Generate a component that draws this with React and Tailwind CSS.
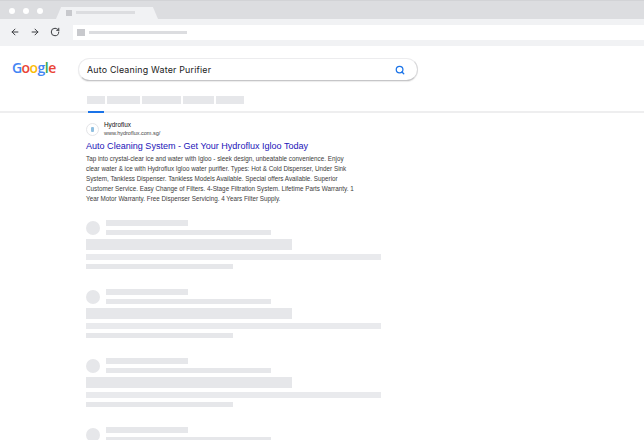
import { ArrowLeft, ArrowRight, RotateCw, Search } from "lucide-react";

function SkeletonResult() {
  return (
    <div className="h-[69px] flex flex-col">
      <div className="flex items-center gap-[6px] h-[16px]">
        <div className="w-[14px] h-[14px] rounded-full bg-[#e6e7ea]" />
        <div className="flex flex-col gap-[4px]">
          <div className="w-[82px] h-[6px] bg-[#e6e7ea]" />
          <div className="w-[165px] h-[5px] bg-[#e6e7ea]" />
        </div>
      </div>
      <div className="w-[206px] h-[11px] bg-[#e6e7ea] mt-[3px]" />
      <div className="w-[295px] h-[6px] bg-[#e9eaed] mt-[4px]" />
      <div className="w-[147px] h-[5px] bg-[#e6e7ea] mt-[4px]" />
    </div>
  );
}

export default function App() {
  return (
    <div className="w-[644px] h-[440px] overflow-hidden bg-white font-['Liberation_Sans',sans-serif]">
      {/* Tab strip */}
      <div className="h-[19px] bg-[#dcdde0] border-t border-[#d2d3d6] flex items-end">
        <div className="flex gap-[8px] pl-[9px] pb-[5px]">
          <div className="w-[6px] h-[6px] rounded-full bg-white" />
          <div className="w-[6px] h-[6px] rounded-full bg-white" />
          <div className="w-[6px] h-[6px] rounded-full bg-white" />
        </div>
        <div className="ml-[13px] w-[102px] h-[12px] bg-[#f1f2f4] [clip-path:polygon(5%_0,95%_0,100%_100%,0_100%)] flex items-center gap-[4px] pl-[10px] pb-[1px]">
          <div className="w-[6px] h-[6px] bg-[#c8c9cd]" />
          <div className="w-[59px] h-[3px] bg-[#dcdde0]" />
        </div>
      </div>

      {/* Toolbar */}
      <div className="h-[27px] bg-[#f1f2f4] flex items-center pb-[1px]">
        <div className="w-[73px] flex items-center gap-[10px] pl-[10px] text-[#3c3e42]">
          <ArrowLeft size={10} strokeWidth={2.4} />
          <ArrowRight size={10} strokeWidth={2.4} />
          <RotateCw size={10} strokeWidth={2.4} />
        </div>
        <div className="flex-1 h-[15px] bg-white flex items-center gap-[4px] pl-[4px]">
          <div className="w-[8px] h-[7px] bg-[#c8c9cd]" />
          <div className="w-[98px] h-[3px] bg-[#dcdde0]" />
        </div>
      </div>

      {/* Search header */}
      <div className="h-[65px]">
        <div className="flex items-center pt-[12px] pl-[12px]">
          <div className="w-[66px] pb-[4px] text-[14px] leading-[18px] font-['Open_Sans',sans-serif] font-semibold tracking-[-0.55px]">
            <span className="text-[#4285f4]">G</span>
            <span className="text-[#ea4335]">o</span>
            <span className="text-[#fbbc05]">o</span>
            <span className="text-[#4285f4]">g</span>
            <span className="text-[#34a853]">l</span>
            <span className="text-[#ea4335]">e</span>
          </div>
          <div className="w-[340px] h-[23px] rounded-full border border-[#ececee] border-b-[#c6c6c8] border-r-[#d8d8da] bg-white shadow-[0_1px_1px_rgba(0,0,0,0.08)] flex items-center justify-between pl-[8px] pr-[12px]">
            <span className="text-[8.85px] tracking-[0.2px] text-[#222] font-['Inter',sans-serif]">Auto Cleaning Water Purifier</span>
            <Search size={10} strokeWidth={3} className="text-[#1a73e8]" />
          </div>
        </div>
        <div className="flex pl-[87px] pt-[15px] gap-[2px]">
          <div className="w-[18px] h-[8px] bg-[#e6e7ea]" />
          <div className="w-[33px] h-[8px] bg-[#e6e7ea]" />
          <div className="w-[39px] h-[8px] bg-[#e6e7ea]" />
          <div className="w-[31px] h-[8px] bg-[#e6e7ea]" />
          <div className="w-[28px] h-[8px] bg-[#e6e7ea]" />
        </div>
      </div>

      {/* Tab underline */}
      <div className="h-[1.5px] mb-[9px] bg-[#eeeeef] pl-[88px]">
        <div className="w-[16px] h-[1.5px] bg-[#1a73e8]" />
      </div>

      {/* Results */}
      <div className="pl-[86px]">
        <div className="h-[98px] w-[300px]">
          <div className="flex items-center gap-[5px] h-[15px]">
            <div className="w-[13px] h-[13px] rounded-full border border-[#e4e5e8] flex items-center justify-center">
              <div className="w-[3px] h-[5px] rounded-[1px] bg-[#8fbfe0]" />
            </div>
            <div className="flex flex-col">
              <span className="text-[6.4px] leading-[8px] text-[#111]">Hydroflux</span>
              <span className="text-[5.5px] leading-[8px] text-[#444]">www.hydroflux.com.sg/</span>
            </div>
          </div>
          <div className="text-[9.05px] leading-[13px] mt-[3px] text-[#2214b8] whitespace-nowrap">Auto Cleaning System - Get Your Hydroflux Igloo Today</div>
          <div className="text-[6.32px] leading-[10px] mt-[1px] text-[#3c3c3c] whitespace-nowrap">
            <div>Tap into crystal-clear ice and water with Igloo - sleek design, unbeatable convenience. Enjoy</div>
            <div>clear water &amp; ice with Hydroflux Igloo water purifier. Types: Hot &amp; Cold Dispenser, Under Sink</div>
            <div>System, Tankless Dispenser. Tankless Models Available. Special offers Available. Superior</div>
            <div>Customer Service. Easy Change of Filters. 4-Stage Filtration System. Lifetime Parts Warranty. 1</div>
            <div>Year Motor Warranty. Free Dispenser Servicing. 4 Years Filter Supply.</div>
          </div>
        </div>
        <div>
          <SkeletonResult />
          <SkeletonResult />
          <SkeletonResult />
          <SkeletonResult />
        </div>
      </div>
    </div>
  );
}
